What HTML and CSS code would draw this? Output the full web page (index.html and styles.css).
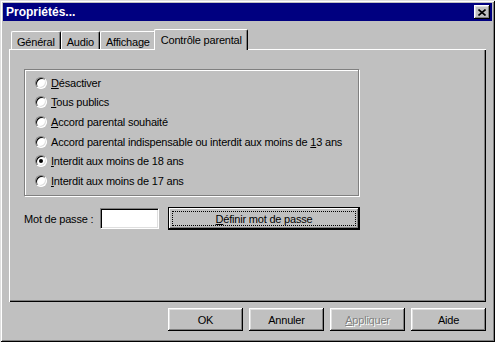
FILE: index.html
```html
<!DOCTYPE html>
<html lang="fr">
<head>
    <meta charset="UTF-8">
    <title>Propriétés...</title>
    <link rel="stylesheet" href="styles.css">
</head>
<body>
    <div class="window">
        <div class="titlebar">
            <span class="title">Propriétés...</span>
            <button class="close-btn" type="button">
                <svg width="8" height="7" viewBox="0 0 8 7"><path d="M0.5 0.5L7.5 6.5M7.5 0.5L0.5 6.5" stroke="#000" stroke-width="1.6" fill="none"/></svg>
            </button>
        </div>
        <div class="content">
            <div class="tabs">
                <div class="tab">Général</div>
                <div class="tab">Audio</div>
                <div class="tab">Affichage</div>
                <div class="tab active">Contrôle parental</div>
            </div>
            <div class="panel">
                <div class="group">
                    <div class="option"><span class="radio"></span><span><u>D</u>ésactiver</span></div>
                    <div class="option"><span class="radio"></span><span><u>T</u>ous publics</span></div>
                    <div class="option"><span class="radio"></span><span><u>A</u>ccord parental souhaité</span></div>
                    <div class="option"><span class="radio"></span><span>Accord parental indispensable ou interdit aux moins de <u>1</u>3 ans</span></div>
                    <div class="option"><span class="radio checked"></span><span><u>I</u>nterdit aux moins de 18 ans</span></div>
                    <div class="option"><span class="radio"></span><span><u>I</u>nterdit aux moins de 17 ans</span></div>
                </div>
                <div class="password-row">
                    <span class="pw-label">Mot de passe :</span>
                    <span class="input"></span>
                    <button class="btn default" type="button"><span class="focus"><u>D</u>éfinir mot de passe</span></button>
                </div>
            </div>
            <div class="actions">
                <button class="btn" type="button">OK</button>
                <button class="btn" type="button">Annuler</button>
                <button class="btn disabled" type="button"><u>A</u>ppliquer</button>
                <button class="btn" type="button">Aide</button>
            </div>
        </div>
    </div>
</body>
</html>
```

FILE: styles.css
```css
body {
    margin: 0;
    padding: 0;
    font-family: 'Liberation Sans', Arial, sans-serif;
    font-size: 11px;
    letter-spacing: -0.2px;
    color: #000;
    background: #c0c0c0;
}
.window {
    width: 495px;
    height: 342px;
    box-sizing: border-box;
    padding: 3px;
    background: #c0c0c0;
    box-shadow: inset 1px 1px #dfdfdf, inset -1px -1px #000, inset 2px 2px #fff, inset -2px -2px #808080;
}
.titlebar {
    height: 18px;
    background: #000080;
    display: flex;
    align-items: center;
    justify-content: space-between;
    padding: 0 2px 0 3px;
}
.title {
    color: #fff;
    font-weight: bold;
    font-size: 12px;
    letter-spacing: 0;
}
.close-btn {
    width: 16px;
    height: 14px;
    padding: 0;
    border: 0;
    background: #c0c0c0;
    display: flex;
    align-items: center;
    justify-content: center;
    box-shadow: inset -1px -1px #000, inset 1px 1px #fff, inset -2px -2px #808080, inset 2px 2px #dfdfdf;
}
.content {
    padding: 8px 6px 0 6px;
}
.tabs {
    height: 20px;
    display: flex;
    align-items: flex-end;
    padding-left: 2px;
}
.tab {
    height: 18px;
    box-sizing: border-box;
    padding: 2px 5px 0 5px;
    display: flex;
    align-items: center;
    border-left: 1px solid #fff;
    border-top: 1px solid #fff;
    border-right: 1px solid #000;
    border-radius: 2px 2px 0 0;
    box-shadow: inset -1px 0 #808080;
    background: #c0c0c0;
}
.tab.active {
    height: 21px;
    padding: 0 5px 0 6px;
    margin: 0 -2px -1px -2px;
    position: relative;
    z-index: 1;
}
.panel {
    height: 253px;
    box-sizing: border-box;
    padding: 20px 0 0 15px;
    box-shadow: inset 1px 1px #fff, inset -1px -1px #000, inset -2px -2px #808080;
}
.group {
    width: 335px;
    height: 127px;
    box-sizing: border-box;
    border: 1px solid #808080;
    box-shadow: 1px 1px 0 #fff, inset 1px 1px 0 #fff;
    padding: 3px 0 0 10px;
}
.option {
    height: 19.6px;
    display: flex;
    align-items: center;
    gap: 4px;
}
.radio {
    width: 12px;
    height: 12px;
    box-sizing: border-box;
    border-radius: 50%;
    background: #fff;
    border: 1px solid;
    border-color: #808080 #fff #fff #808080;
    box-shadow: inset 1px 1px #000, inset -1px -1px #dfdfdf;
    display: flex;
    align-items: center;
    justify-content: center;
    flex-shrink: 0;
}
.radio.checked::after {
    content: "";
    width: 4px;
    height: 4px;
    border-radius: 50%;
    background: #000;
}
.password-row {
    display: flex;
    align-items: center;
    margin-top: 11px;
}
.pw-label {
    width: 76px;
}
.input {
    width: 59px;
    height: 21px;
    box-sizing: border-box;
    background: #fff;
    border: 1px solid;
    border-color: #808080 #fff #fff #808080;
    box-shadow: inset 1px 1px #000, inset -1px -1px #dfdfdf;
}
.btn {
    width: 75px;
    height: 23px;
    padding: 0;
    border: 0;
    font-family: inherit;
    font-size: 11px;
    letter-spacing: -0.2px;
    color: #000;
    background: #c0c0c0;
    box-shadow: inset -1px -1px #000, inset 1px 1px #fff, inset -2px -2px #808080, inset 2px 2px #dfdfdf;
}
.btn.default {
    width: 192px;
    margin-left: 9px;
    border: 1px solid #000;
    display: flex;
    padding: 3px;
    box-shadow: inset -1px -1px #000, inset 1px 1px #fff, inset -2px -2px #808080;
}
.focus {
    flex: 1;
    border: 1px dotted #000;
    display: flex;
    align-items: center;
    justify-content: center;
}
.btn.disabled {
    color: #808080;
    text-shadow: 1px 1px 0 #fff;
}
.actions {
    display: flex;
    justify-content: flex-end;
    gap: 6px;
    margin-top: 6px;
}
```
